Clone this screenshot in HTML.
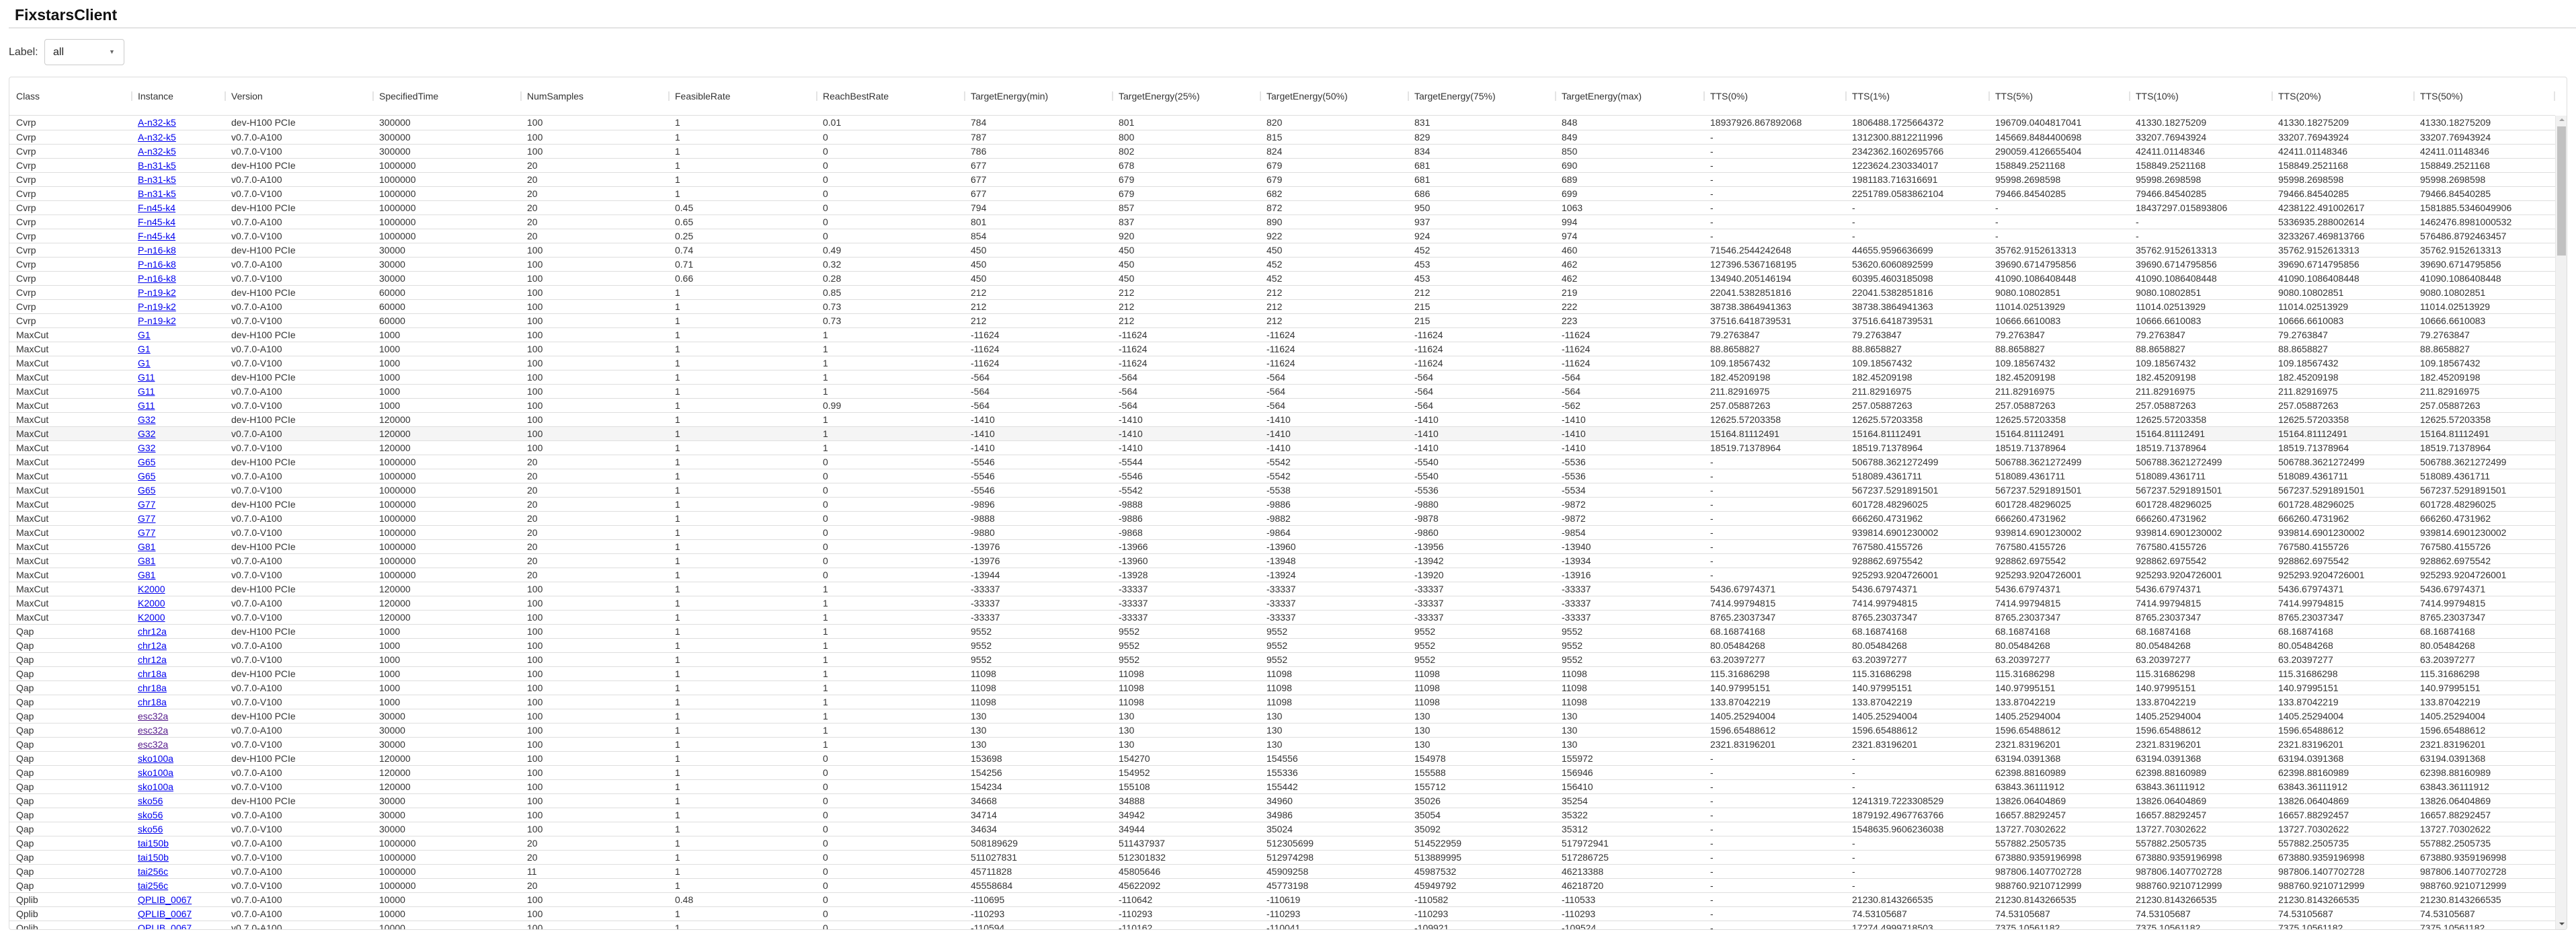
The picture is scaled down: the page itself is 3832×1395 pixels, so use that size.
<!DOCTYPE html>
<html><head><meta charset="utf-8"><style>
*{box-sizing:border-box}
body{margin:0;width:3832px;height:1395px;overflow:hidden;background:#fff;font-family:"Liberation Sans",Arial,sans-serif;color:#333;position:relative}
.t{position:absolute;left:22px;top:0;height:42px;line-height:44px;font-size:23px;font-weight:bold;color:#111;margin:0}
.hr{position:absolute;left:13px;right:0;top:41px;height:1px;background:#ccc}
.lb{position:absolute;left:13px;top:66px;font-size:16px;line-height:24px}
.sel{position:absolute;left:66px;top:58px;width:119px;height:39px;border:1px solid #ccc;border-radius:4px;font-size:16px;line-height:37px;padding-left:12px;color:#222}
.sel b{position:absolute;left:95px;top:0;font-size:9px;color:#666;font-weight:normal}
.card{position:absolute;left:13px;top:114px;width:3806px;height:1269px;border:1px solid #ddd;border-radius:4px;overflow:hidden}
table{border-collapse:collapse;table-layout:fixed;width:3787px;font-size:14px}
td,th{padding:0 0 0 10px;white-space:nowrap;overflow:hidden;text-align:left;font-weight:normal}
.hd{position:absolute;left:0;top:0}
.hd th{height:56px;border-bottom:1px solid #ddd;position:relative;color:#333}
.hd th+th::before{content:"";position:absolute;left:0;top:21px;width:2px;height:14px;background:#e4e4e4}
.hd th:last-child::after{content:"";position:absolute;right:0;top:21px;width:2px;height:14px;background:#e4e4e4}
.bd{position:absolute;left:0;top:57px}
.bd td{height:21px;line-height:20px;border-bottom:1px solid #dedede}
.bd tr.h td{background:#f5f5f5}
a{color:#00e;text-decoration:underline}
a.v{color:#551a8b}
.sb{position:absolute;left:3787px;top:57px;width:18px;height:1220px;background:#f1f1f1;border-left:1px solid #e6e6e6}
.th{position:absolute;left:2px;top:16px;width:13px;height:192px;background:#c1c1c1}
.up{position:absolute;left:5px;top:4px;width:0;height:0;border-left:4px solid transparent;border-right:4px solid transparent;border-bottom:4px solid #a3a3a3}
.dn{position:absolute;left:5px;top:1200px;width:0;height:0;border-left:4px solid transparent;border-right:4px solid transparent;border-top:4px solid #505050}
</style></head><body>
<h1 class="t">FixstarsClient</h1>
<div class="hr"></div>
<div class="lb">Label:</div>
<div class="sel">all<b>▼</b></div>
<div class="card">
<table class="hd"><colgroup><col style="width:181px"><col style="width:139px"><col style="width:220px"><col style="width:220px"><col style="width:220px"><col style="width:220px"><col style="width:220px"><col style="width:220px"><col style="width:220px"><col style="width:220px"><col style="width:219px"><col style="width:221px"><col style="width:211px"><col style="width:213px"><col style="width:209px"><col style="width:212px"><col style="width:211px"><col style="width:211px"></colgroup>
<tr><th>Class</th><th>Instance</th><th>Version</th><th>SpecifiedTime</th><th>NumSamples</th><th>FeasibleRate</th><th>ReachBestRate</th><th>TargetEnergy(min)</th><th>TargetEnergy(25%)</th><th>TargetEnergy(50%)</th><th>TargetEnergy(75%)</th><th>TargetEnergy(max)</th><th>TTS(0%)</th><th>TTS(1%)</th><th>TTS(5%)</th><th>TTS(10%)</th><th>TTS(20%)</th><th>TTS(50%)</th></tr></table>
<table class="bd"><colgroup><col style="width:181px"><col style="width:139px"><col style="width:220px"><col style="width:220px"><col style="width:220px"><col style="width:220px"><col style="width:220px"><col style="width:220px"><col style="width:220px"><col style="width:220px"><col style="width:219px"><col style="width:221px"><col style="width:211px"><col style="width:213px"><col style="width:209px"><col style="width:212px"><col style="width:211px"><col style="width:211px"></colgroup>
<tr><td>Cvrp</td><td><a>A-n32-k5</a></td><td>dev-H100 PCIe</td><td>300000</td><td>100</td><td>1</td><td>0.01</td><td>784</td><td>801</td><td>820</td><td>831</td><td>848</td><td>18937926.867892068</td><td>1806488.1725664372</td><td>196709.0404817041</td><td>41330.18275209</td><td>41330.18275209</td><td>41330.18275209</td></tr>
<tr><td>Cvrp</td><td><a>A-n32-k5</a></td><td>v0.7.0-A100</td><td>300000</td><td>100</td><td>1</td><td>0</td><td>787</td><td>800</td><td>815</td><td>829</td><td>849</td><td>-</td><td>1312300.8812211996</td><td>145669.8484400698</td><td>33207.76943924</td><td>33207.76943924</td><td>33207.76943924</td></tr>
<tr><td>Cvrp</td><td><a>A-n32-k5</a></td><td>v0.7.0-V100</td><td>300000</td><td>100</td><td>1</td><td>0</td><td>786</td><td>802</td><td>824</td><td>834</td><td>850</td><td>-</td><td>2342362.1602695766</td><td>290059.4126655404</td><td>42411.01148346</td><td>42411.01148346</td><td>42411.01148346</td></tr>
<tr><td>Cvrp</td><td><a>B-n31-k5</a></td><td>dev-H100 PCIe</td><td>1000000</td><td>20</td><td>1</td><td>0</td><td>677</td><td>678</td><td>679</td><td>681</td><td>690</td><td>-</td><td>1223624.230334017</td><td>158849.2521168</td><td>158849.2521168</td><td>158849.2521168</td><td>158849.2521168</td></tr>
<tr><td>Cvrp</td><td><a>B-n31-k5</a></td><td>v0.7.0-A100</td><td>1000000</td><td>20</td><td>1</td><td>0</td><td>677</td><td>679</td><td>679</td><td>681</td><td>689</td><td>-</td><td>1981183.716316691</td><td>95998.2698598</td><td>95998.2698598</td><td>95998.2698598</td><td>95998.2698598</td></tr>
<tr><td>Cvrp</td><td><a>B-n31-k5</a></td><td>v0.7.0-V100</td><td>1000000</td><td>20</td><td>1</td><td>0</td><td>677</td><td>679</td><td>682</td><td>686</td><td>699</td><td>-</td><td>2251789.0583862104</td><td>79466.84540285</td><td>79466.84540285</td><td>79466.84540285</td><td>79466.84540285</td></tr>
<tr><td>Cvrp</td><td><a>F-n45-k4</a></td><td>dev-H100 PCIe</td><td>1000000</td><td>20</td><td>0.45</td><td>0</td><td>794</td><td>857</td><td>872</td><td>950</td><td>1063</td><td>-</td><td>-</td><td>-</td><td>18437297.015893806</td><td>4238122.491002617</td><td>1581885.5346049906</td></tr>
<tr><td>Cvrp</td><td><a>F-n45-k4</a></td><td>v0.7.0-A100</td><td>1000000</td><td>20</td><td>0.65</td><td>0</td><td>801</td><td>837</td><td>890</td><td>937</td><td>994</td><td>-</td><td>-</td><td>-</td><td>-</td><td>5336935.288002614</td><td>1462476.8981000532</td></tr>
<tr><td>Cvrp</td><td><a>F-n45-k4</a></td><td>v0.7.0-V100</td><td>1000000</td><td>20</td><td>0.25</td><td>0</td><td>854</td><td>920</td><td>922</td><td>924</td><td>974</td><td>-</td><td>-</td><td>-</td><td>-</td><td>3233267.469813766</td><td>576486.8792463457</td></tr>
<tr><td>Cvrp</td><td><a>P-n16-k8</a></td><td>dev-H100 PCIe</td><td>30000</td><td>100</td><td>0.74</td><td>0.49</td><td>450</td><td>450</td><td>450</td><td>452</td><td>460</td><td>71546.2544242648</td><td>44655.9596636699</td><td>35762.9152613313</td><td>35762.9152613313</td><td>35762.9152613313</td><td>35762.9152613313</td></tr>
<tr><td>Cvrp</td><td><a>P-n16-k8</a></td><td>v0.7.0-A100</td><td>30000</td><td>100</td><td>0.71</td><td>0.32</td><td>450</td><td>450</td><td>452</td><td>453</td><td>462</td><td>127396.5367168195</td><td>53620.6060892599</td><td>39690.6714795856</td><td>39690.6714795856</td><td>39690.6714795856</td><td>39690.6714795856</td></tr>
<tr><td>Cvrp</td><td><a>P-n16-k8</a></td><td>v0.7.0-V100</td><td>30000</td><td>100</td><td>0.66</td><td>0.28</td><td>450</td><td>450</td><td>452</td><td>453</td><td>462</td><td>134940.205146194</td><td>60395.4603185098</td><td>41090.1086408448</td><td>41090.1086408448</td><td>41090.1086408448</td><td>41090.1086408448</td></tr>
<tr><td>Cvrp</td><td><a>P-n19-k2</a></td><td>dev-H100 PCIe</td><td>60000</td><td>100</td><td>1</td><td>0.85</td><td>212</td><td>212</td><td>212</td><td>212</td><td>219</td><td>22041.5382851816</td><td>22041.5382851816</td><td>9080.10802851</td><td>9080.10802851</td><td>9080.10802851</td><td>9080.10802851</td></tr>
<tr><td>Cvrp</td><td><a>P-n19-k2</a></td><td>v0.7.0-A100</td><td>60000</td><td>100</td><td>1</td><td>0.73</td><td>212</td><td>212</td><td>212</td><td>215</td><td>222</td><td>38738.3864941363</td><td>38738.3864941363</td><td>11014.02513929</td><td>11014.02513929</td><td>11014.02513929</td><td>11014.02513929</td></tr>
<tr><td>Cvrp</td><td><a>P-n19-k2</a></td><td>v0.7.0-V100</td><td>60000</td><td>100</td><td>1</td><td>0.73</td><td>212</td><td>212</td><td>212</td><td>215</td><td>223</td><td>37516.6418739531</td><td>37516.6418739531</td><td>10666.6610083</td><td>10666.6610083</td><td>10666.6610083</td><td>10666.6610083</td></tr>
<tr><td>MaxCut</td><td><a>G1</a></td><td>dev-H100 PCIe</td><td>1000</td><td>100</td><td>1</td><td>1</td><td>-11624</td><td>-11624</td><td>-11624</td><td>-11624</td><td>-11624</td><td>79.2763847</td><td>79.2763847</td><td>79.2763847</td><td>79.2763847</td><td>79.2763847</td><td>79.2763847</td></tr>
<tr><td>MaxCut</td><td><a>G1</a></td><td>v0.7.0-A100</td><td>1000</td><td>100</td><td>1</td><td>1</td><td>-11624</td><td>-11624</td><td>-11624</td><td>-11624</td><td>-11624</td><td>88.8658827</td><td>88.8658827</td><td>88.8658827</td><td>88.8658827</td><td>88.8658827</td><td>88.8658827</td></tr>
<tr><td>MaxCut</td><td><a>G1</a></td><td>v0.7.0-V100</td><td>1000</td><td>100</td><td>1</td><td>1</td><td>-11624</td><td>-11624</td><td>-11624</td><td>-11624</td><td>-11624</td><td>109.18567432</td><td>109.18567432</td><td>109.18567432</td><td>109.18567432</td><td>109.18567432</td><td>109.18567432</td></tr>
<tr><td>MaxCut</td><td><a>G11</a></td><td>dev-H100 PCIe</td><td>1000</td><td>100</td><td>1</td><td>1</td><td>-564</td><td>-564</td><td>-564</td><td>-564</td><td>-564</td><td>182.45209198</td><td>182.45209198</td><td>182.45209198</td><td>182.45209198</td><td>182.45209198</td><td>182.45209198</td></tr>
<tr><td>MaxCut</td><td><a>G11</a></td><td>v0.7.0-A100</td><td>1000</td><td>100</td><td>1</td><td>1</td><td>-564</td><td>-564</td><td>-564</td><td>-564</td><td>-564</td><td>211.82916975</td><td>211.82916975</td><td>211.82916975</td><td>211.82916975</td><td>211.82916975</td><td>211.82916975</td></tr>
<tr><td>MaxCut</td><td><a>G11</a></td><td>v0.7.0-V100</td><td>1000</td><td>100</td><td>1</td><td>0.99</td><td>-564</td><td>-564</td><td>-564</td><td>-564</td><td>-562</td><td>257.05887263</td><td>257.05887263</td><td>257.05887263</td><td>257.05887263</td><td>257.05887263</td><td>257.05887263</td></tr>
<tr><td>MaxCut</td><td><a>G32</a></td><td>dev-H100 PCIe</td><td>120000</td><td>100</td><td>1</td><td>1</td><td>-1410</td><td>-1410</td><td>-1410</td><td>-1410</td><td>-1410</td><td>12625.57203358</td><td>12625.57203358</td><td>12625.57203358</td><td>12625.57203358</td><td>12625.57203358</td><td>12625.57203358</td></tr>
<tr class="h"><td>MaxCut</td><td><a>G32</a></td><td>v0.7.0-A100</td><td>120000</td><td>100</td><td>1</td><td>1</td><td>-1410</td><td>-1410</td><td>-1410</td><td>-1410</td><td>-1410</td><td>15164.81112491</td><td>15164.81112491</td><td>15164.81112491</td><td>15164.81112491</td><td>15164.81112491</td><td>15164.81112491</td></tr>
<tr><td>MaxCut</td><td><a>G32</a></td><td>v0.7.0-V100</td><td>120000</td><td>100</td><td>1</td><td>1</td><td>-1410</td><td>-1410</td><td>-1410</td><td>-1410</td><td>-1410</td><td>18519.71378964</td><td>18519.71378964</td><td>18519.71378964</td><td>18519.71378964</td><td>18519.71378964</td><td>18519.71378964</td></tr>
<tr><td>MaxCut</td><td><a>G65</a></td><td>dev-H100 PCIe</td><td>1000000</td><td>20</td><td>1</td><td>0</td><td>-5546</td><td>-5544</td><td>-5542</td><td>-5540</td><td>-5536</td><td>-</td><td>506788.3621272499</td><td>506788.3621272499</td><td>506788.3621272499</td><td>506788.3621272499</td><td>506788.3621272499</td></tr>
<tr><td>MaxCut</td><td><a>G65</a></td><td>v0.7.0-A100</td><td>1000000</td><td>20</td><td>1</td><td>0</td><td>-5546</td><td>-5546</td><td>-5542</td><td>-5540</td><td>-5536</td><td>-</td><td>518089.4361711</td><td>518089.4361711</td><td>518089.4361711</td><td>518089.4361711</td><td>518089.4361711</td></tr>
<tr><td>MaxCut</td><td><a>G65</a></td><td>v0.7.0-V100</td><td>1000000</td><td>20</td><td>1</td><td>0</td><td>-5546</td><td>-5542</td><td>-5538</td><td>-5536</td><td>-5534</td><td>-</td><td>567237.5291891501</td><td>567237.5291891501</td><td>567237.5291891501</td><td>567237.5291891501</td><td>567237.5291891501</td></tr>
<tr><td>MaxCut</td><td><a>G77</a></td><td>dev-H100 PCIe</td><td>1000000</td><td>20</td><td>1</td><td>0</td><td>-9896</td><td>-9888</td><td>-9886</td><td>-9880</td><td>-9872</td><td>-</td><td>601728.48296025</td><td>601728.48296025</td><td>601728.48296025</td><td>601728.48296025</td><td>601728.48296025</td></tr>
<tr><td>MaxCut</td><td><a>G77</a></td><td>v0.7.0-A100</td><td>1000000</td><td>20</td><td>1</td><td>0</td><td>-9888</td><td>-9886</td><td>-9882</td><td>-9878</td><td>-9872</td><td>-</td><td>666260.4731962</td><td>666260.4731962</td><td>666260.4731962</td><td>666260.4731962</td><td>666260.4731962</td></tr>
<tr><td>MaxCut</td><td><a>G77</a></td><td>v0.7.0-V100</td><td>1000000</td><td>20</td><td>1</td><td>0</td><td>-9880</td><td>-9868</td><td>-9864</td><td>-9860</td><td>-9854</td><td>-</td><td>939814.6901230002</td><td>939814.6901230002</td><td>939814.6901230002</td><td>939814.6901230002</td><td>939814.6901230002</td></tr>
<tr><td>MaxCut</td><td><a>G81</a></td><td>dev-H100 PCIe</td><td>1000000</td><td>20</td><td>1</td><td>0</td><td>-13976</td><td>-13966</td><td>-13960</td><td>-13956</td><td>-13940</td><td>-</td><td>767580.4155726</td><td>767580.4155726</td><td>767580.4155726</td><td>767580.4155726</td><td>767580.4155726</td></tr>
<tr><td>MaxCut</td><td><a>G81</a></td><td>v0.7.0-A100</td><td>1000000</td><td>20</td><td>1</td><td>0</td><td>-13976</td><td>-13960</td><td>-13948</td><td>-13942</td><td>-13934</td><td>-</td><td>928862.6975542</td><td>928862.6975542</td><td>928862.6975542</td><td>928862.6975542</td><td>928862.6975542</td></tr>
<tr><td>MaxCut</td><td><a>G81</a></td><td>v0.7.0-V100</td><td>1000000</td><td>20</td><td>1</td><td>0</td><td>-13944</td><td>-13928</td><td>-13924</td><td>-13920</td><td>-13916</td><td>-</td><td>925293.9204726001</td><td>925293.9204726001</td><td>925293.9204726001</td><td>925293.9204726001</td><td>925293.9204726001</td></tr>
<tr><td>MaxCut</td><td><a>K2000</a></td><td>dev-H100 PCIe</td><td>120000</td><td>100</td><td>1</td><td>1</td><td>-33337</td><td>-33337</td><td>-33337</td><td>-33337</td><td>-33337</td><td>5436.67974371</td><td>5436.67974371</td><td>5436.67974371</td><td>5436.67974371</td><td>5436.67974371</td><td>5436.67974371</td></tr>
<tr><td>MaxCut</td><td><a>K2000</a></td><td>v0.7.0-A100</td><td>120000</td><td>100</td><td>1</td><td>1</td><td>-33337</td><td>-33337</td><td>-33337</td><td>-33337</td><td>-33337</td><td>7414.99794815</td><td>7414.99794815</td><td>7414.99794815</td><td>7414.99794815</td><td>7414.99794815</td><td>7414.99794815</td></tr>
<tr><td>MaxCut</td><td><a>K2000</a></td><td>v0.7.0-V100</td><td>120000</td><td>100</td><td>1</td><td>1</td><td>-33337</td><td>-33337</td><td>-33337</td><td>-33337</td><td>-33337</td><td>8765.23037347</td><td>8765.23037347</td><td>8765.23037347</td><td>8765.23037347</td><td>8765.23037347</td><td>8765.23037347</td></tr>
<tr><td>Qap</td><td><a>chr12a</a></td><td>dev-H100 PCIe</td><td>1000</td><td>100</td><td>1</td><td>1</td><td>9552</td><td>9552</td><td>9552</td><td>9552</td><td>9552</td><td>68.16874168</td><td>68.16874168</td><td>68.16874168</td><td>68.16874168</td><td>68.16874168</td><td>68.16874168</td></tr>
<tr><td>Qap</td><td><a>chr12a</a></td><td>v0.7.0-A100</td><td>1000</td><td>100</td><td>1</td><td>1</td><td>9552</td><td>9552</td><td>9552</td><td>9552</td><td>9552</td><td>80.05484268</td><td>80.05484268</td><td>80.05484268</td><td>80.05484268</td><td>80.05484268</td><td>80.05484268</td></tr>
<tr><td>Qap</td><td><a>chr12a</a></td><td>v0.7.0-V100</td><td>1000</td><td>100</td><td>1</td><td>1</td><td>9552</td><td>9552</td><td>9552</td><td>9552</td><td>9552</td><td>63.20397277</td><td>63.20397277</td><td>63.20397277</td><td>63.20397277</td><td>63.20397277</td><td>63.20397277</td></tr>
<tr><td>Qap</td><td><a>chr18a</a></td><td>dev-H100 PCIe</td><td>1000</td><td>100</td><td>1</td><td>1</td><td>11098</td><td>11098</td><td>11098</td><td>11098</td><td>11098</td><td>115.31686298</td><td>115.31686298</td><td>115.31686298</td><td>115.31686298</td><td>115.31686298</td><td>115.31686298</td></tr>
<tr><td>Qap</td><td><a>chr18a</a></td><td>v0.7.0-A100</td><td>1000</td><td>100</td><td>1</td><td>1</td><td>11098</td><td>11098</td><td>11098</td><td>11098</td><td>11098</td><td>140.97995151</td><td>140.97995151</td><td>140.97995151</td><td>140.97995151</td><td>140.97995151</td><td>140.97995151</td></tr>
<tr><td>Qap</td><td><a>chr18a</a></td><td>v0.7.0-V100</td><td>1000</td><td>100</td><td>1</td><td>1</td><td>11098</td><td>11098</td><td>11098</td><td>11098</td><td>11098</td><td>133.87042219</td><td>133.87042219</td><td>133.87042219</td><td>133.87042219</td><td>133.87042219</td><td>133.87042219</td></tr>
<tr><td>Qap</td><td><a class="v">esc32a</a></td><td>dev-H100 PCIe</td><td>30000</td><td>100</td><td>1</td><td>1</td><td>130</td><td>130</td><td>130</td><td>130</td><td>130</td><td>1405.25294004</td><td>1405.25294004</td><td>1405.25294004</td><td>1405.25294004</td><td>1405.25294004</td><td>1405.25294004</td></tr>
<tr><td>Qap</td><td><a class="v">esc32a</a></td><td>v0.7.0-A100</td><td>30000</td><td>100</td><td>1</td><td>1</td><td>130</td><td>130</td><td>130</td><td>130</td><td>130</td><td>1596.65488612</td><td>1596.65488612</td><td>1596.65488612</td><td>1596.65488612</td><td>1596.65488612</td><td>1596.65488612</td></tr>
<tr><td>Qap</td><td><a class="v">esc32a</a></td><td>v0.7.0-V100</td><td>30000</td><td>100</td><td>1</td><td>1</td><td>130</td><td>130</td><td>130</td><td>130</td><td>130</td><td>2321.83196201</td><td>2321.83196201</td><td>2321.83196201</td><td>2321.83196201</td><td>2321.83196201</td><td>2321.83196201</td></tr>
<tr><td>Qap</td><td><a>sko100a</a></td><td>dev-H100 PCIe</td><td>120000</td><td>100</td><td>1</td><td>0</td><td>153698</td><td>154270</td><td>154556</td><td>154978</td><td>155972</td><td>-</td><td>-</td><td>63194.0391368</td><td>63194.0391368</td><td>63194.0391368</td><td>63194.0391368</td></tr>
<tr><td>Qap</td><td><a>sko100a</a></td><td>v0.7.0-A100</td><td>120000</td><td>100</td><td>1</td><td>0</td><td>154256</td><td>154952</td><td>155336</td><td>155588</td><td>156946</td><td>-</td><td>-</td><td>62398.88160989</td><td>62398.88160989</td><td>62398.88160989</td><td>62398.88160989</td></tr>
<tr><td>Qap</td><td><a>sko100a</a></td><td>v0.7.0-V100</td><td>120000</td><td>100</td><td>1</td><td>0</td><td>154234</td><td>155108</td><td>155442</td><td>155712</td><td>156410</td><td>-</td><td>-</td><td>63843.36111912</td><td>63843.36111912</td><td>63843.36111912</td><td>63843.36111912</td></tr>
<tr><td>Qap</td><td><a>sko56</a></td><td>dev-H100 PCIe</td><td>30000</td><td>100</td><td>1</td><td>0</td><td>34668</td><td>34888</td><td>34960</td><td>35026</td><td>35254</td><td>-</td><td>1241319.7223308529</td><td>13826.06404869</td><td>13826.06404869</td><td>13826.06404869</td><td>13826.06404869</td></tr>
<tr><td>Qap</td><td><a>sko56</a></td><td>v0.7.0-A100</td><td>30000</td><td>100</td><td>1</td><td>0</td><td>34714</td><td>34942</td><td>34986</td><td>35054</td><td>35322</td><td>-</td><td>1879192.4967763766</td><td>16657.88292457</td><td>16657.88292457</td><td>16657.88292457</td><td>16657.88292457</td></tr>
<tr><td>Qap</td><td><a>sko56</a></td><td>v0.7.0-V100</td><td>30000</td><td>100</td><td>1</td><td>0</td><td>34634</td><td>34944</td><td>35024</td><td>35092</td><td>35312</td><td>-</td><td>1548635.9606236038</td><td>13727.70302622</td><td>13727.70302622</td><td>13727.70302622</td><td>13727.70302622</td></tr>
<tr><td>Qap</td><td><a>tai150b</a></td><td>v0.7.0-A100</td><td>1000000</td><td>20</td><td>1</td><td>0</td><td>508189629</td><td>511437937</td><td>512305699</td><td>514522959</td><td>517972941</td><td>-</td><td>-</td><td>557882.2505735</td><td>557882.2505735</td><td>557882.2505735</td><td>557882.2505735</td></tr>
<tr><td>Qap</td><td><a>tai150b</a></td><td>v0.7.0-V100</td><td>1000000</td><td>20</td><td>1</td><td>0</td><td>511027831</td><td>512301832</td><td>512974298</td><td>513889995</td><td>517286725</td><td>-</td><td>-</td><td>673880.9359196998</td><td>673880.9359196998</td><td>673880.9359196998</td><td>673880.9359196998</td></tr>
<tr><td>Qap</td><td><a>tai256c</a></td><td>v0.7.0-A100</td><td>1000000</td><td>11</td><td>1</td><td>0</td><td>45711828</td><td>45805646</td><td>45909258</td><td>45987532</td><td>46213388</td><td>-</td><td>-</td><td>987806.1407702728</td><td>987806.1407702728</td><td>987806.1407702728</td><td>987806.1407702728</td></tr>
<tr><td>Qap</td><td><a>tai256c</a></td><td>v0.7.0-V100</td><td>1000000</td><td>20</td><td>1</td><td>0</td><td>45558684</td><td>45622092</td><td>45773198</td><td>45949792</td><td>46218720</td><td>-</td><td>-</td><td>988760.9210712999</td><td>988760.9210712999</td><td>988760.9210712999</td><td>988760.9210712999</td></tr>
<tr><td>Qplib</td><td><a>QPLIB_0067</a></td><td>v0.7.0-A100</td><td>10000</td><td>100</td><td>0.48</td><td>0</td><td>-110695</td><td>-110642</td><td>-110619</td><td>-110582</td><td>-110533</td><td>-</td><td>21230.8143266535</td><td>21230.8143266535</td><td>21230.8143266535</td><td>21230.8143266535</td><td>21230.8143266535</td></tr>
<tr><td>Qplib</td><td><a>QPLIB_0067</a></td><td>v0.7.0-A100</td><td>10000</td><td>100</td><td>1</td><td>0</td><td>-110293</td><td>-110293</td><td>-110293</td><td>-110293</td><td>-110293</td><td>-</td><td>74.53105687</td><td>74.53105687</td><td>74.53105687</td><td>74.53105687</td><td>74.53105687</td></tr>
<tr><td>Qplib</td><td><a>QPLIB_0067</a></td><td>v0.7.0-A100</td><td>10000</td><td>100</td><td>1</td><td>0</td><td>-110594</td><td>-110162</td><td>-110041</td><td>-109921</td><td>-109524</td><td>-</td><td>17274.4999718503</td><td>7375.10561182</td><td>7375.10561182</td><td>7375.10561182</td><td>7375.10561182</td></tr>
</table>
<div class="sb"><div class="up"></div><div class="th"></div><div class="dn"></div></div>
</div>
</body></html>
